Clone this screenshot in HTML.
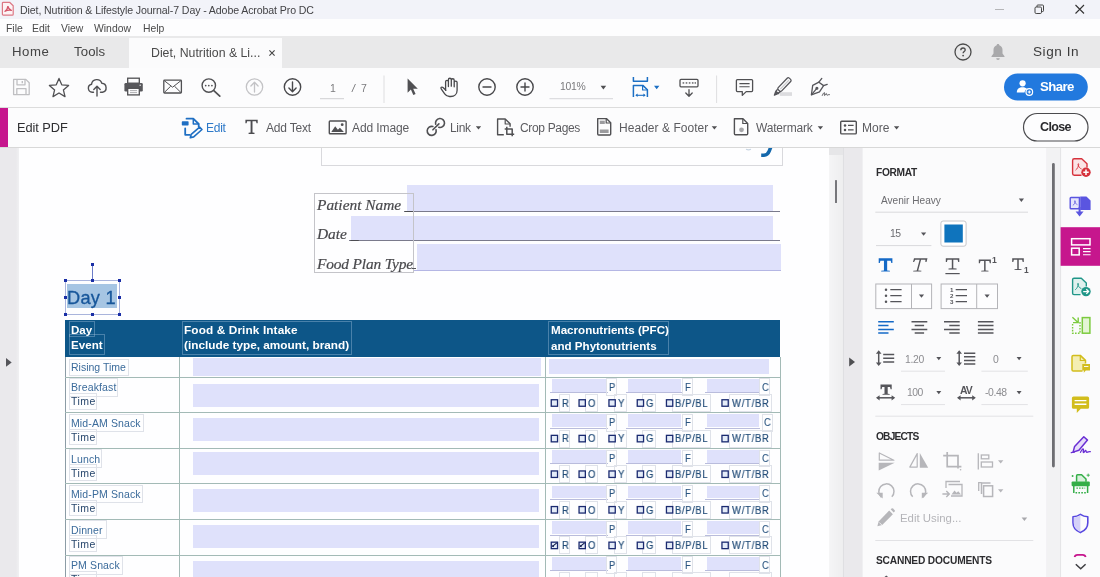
<!DOCTYPE html>
<html>
<head>
<meta charset="utf-8">
<title>Acrobat</title>
<style>
*{box-sizing:border-box;margin:0;padding:0}
html,body{width:1100px;height:577px;overflow:hidden;background:#fff;font-family:"Liberation Sans",sans-serif;color:#2c2c2c}
.abs{position:absolute}
#titlebar{left:0;top:0;width:1100px;height:19px;background:#f2f3f9}
#menubar{left:0;top:19px;width:1100px;height:17px;background:#fdfdfe}
#tabbar{left:0;top:36px;width:1100px;height:32px;background:#e9e9ea}
#toolbar{left:0;top:68px;width:1100px;height:40px;background:#fcfcfd;border-bottom:1px solid #dcdcdc}
#editbar{left:0;top:108px;width:1100px;height:40px;background:#fcfcfd;border-bottom:1px solid #d8d8d8}
#doc{left:0;top:148px;width:845px;height:429px;background:#fefeff;overflow:hidden}
#panel{left:845px;top:148px;width:255px;height:429px;background:#eae9ec;overflow:hidden}
.t{position:absolute;white-space:nowrap;line-height:1;will-change:transform}
svg{position:absolute;overflow:visible}
</style>
</head>
<body>

<div id="titlebar" class="abs">
  <svg style="left:.2px;top:.2px" width="15" height="17" viewBox="0 0 15 17"><path d="M3.300 2.300h6.300l3.600 3.500v8.400q0 .9-.9 .9h-9q-.9 0-.9-.9v-11q0-.9 .9-.9z" fill="#fdf3f5" stroke="#dc7885" stroke-width="1.200" stroke-linejoin="round"/><path d="M5 11.400q2.300-1.200 2.900-5.200q.6 3.300 3.500 4.100M5 11.300q3-1.500 6.300-1" fill="none" stroke="#d4566a" stroke-width="1.250" stroke-linecap="round"/></svg>
  <div class="t" style="left:19.600px;top:5px;font-size:10.6px;letter-spacing:-0.110px;color:#434346">Diet, Nutrition &amp; Lifestyle Journal-7 Day - Adobe Acrobat Pro DC</div>
  <svg style="left:994px;top:4px" width="92" height="12" viewBox="0 0 92 12"><path d="M1 5.500h9" stroke="#b5b5b8" stroke-width="1"/><rect x="41" y="3" width="6.500" height="6.500" rx="1.200" fill="none" stroke="#444" stroke-width="1"/><path d="M43 3v-1.200q0-.8 .8-.8h4.700q1 0 1 1v4.700q0 .8-.8 .8h-1.200" fill="none" stroke="#444" stroke-width="1"/><path d="M81.500 1l8.500 8.500M90 1l-8.500 8.500" stroke="#333" stroke-width="1.100"/></svg>
</div>
<div id="menubar" class="abs">
  <div class="t" style="left:6px;top:5px;font-size:10.4px;color:#4a4a4a">File</div>
  <div class="t" style="left:32px;top:5px;font-size:10.4px;color:#4a4a4a">Edit</div>
  <div class="t" style="left:61px;top:5px;font-size:10.4px;color:#4a4a4a">View</div>
  <div class="t" style="left:94px;top:5px;font-size:10.4px;color:#4a4a4a">Window</div>
  <div class="t" style="left:143px;top:5px;font-size:10.4px;color:#4a4a4a">Help</div>
</div>
<div id="tabbar" class="abs">
  <div class="abs" style="left:129px;top:1.500px;width:153px;height:30.500px;background:#fbfbfc"></div>
  <div class="t" style="left:12.300px;top:9px;font-size:13.2px;letter-spacing:0.55px;color:#444">Home</div>
  <div class="t" style="left:74px;top:9px;font-size:13.2px;letter-spacing:0.1px;color:#444">Tools</div>
  <div class="t" style="left:150.600px;top:10.700px;font-size:12.3px;color:#4a4a4a">Diet, Nutrition &amp; Li...</div>
  <svg style="left:269px;top:13.600px" width="6" height="6" viewBox="0 0 6 6"><path d="M.4 .4l5.200 5.200M5.600 .4l-5.200 5.200" stroke="#444" stroke-width="1.100"/></svg>
  <svg style="left:954px;top:7px" width="18" height="18" viewBox="0 0 18 18"><circle cx="9" cy="9" r="8" fill="none" stroke="#4b4b4b" stroke-width="1.300"/><path d="M6.800 7.200c0-1.400 1-2.200 2.200-2.200s2.200.800 2.200 2c0 1.500-2.100 1.600-2.100 3.300" fill="none" stroke="#4b4b4b" stroke-width="1.300"/><circle cx="9.100" cy="12.600" r=".9" fill="#4b4b4b"/></svg>
  <svg style="left:990px;top:7px" width="16" height="18" viewBox="0 0 16 18"><path d="M8 1c-.8 0-1.300.5-1.300 1.200c-2 .6-3.200 2.300-3.200 4.600v3.700l-2 2.700v.8h13v-.8l-2-2.700v-3.700c0-2.300-1.200-4-3.200-4.600c0-.7-.5-1.200-1.300-1.200z" fill="#a9a9ab"/><path d="M6.200 15.300a1.800 1.800 0 0 0 3.600 0z" fill="#a9a9ab"/></svg>
  <div class="t" style="left:1033px;top:9px;font-size:13.6px;letter-spacing:0.55px;color:#3c3c3c">Sign In</div>
</div>

<div id="toolbar" class="abs">
<svg style="left:0;top:0" width="1100" height="40" viewBox="0 68 1100 40">
  <!-- save (disabled) -->
  <g fill="none" stroke="#bfbfc2" stroke-width="1.3" stroke-linejoin="round">
    <path d="M13.600 79.400h12.200l3.400 3.400v11.800h-15.600z"/>
    <path d="M17 79.400v5.400h8v-5.400M16.800 94.600v-6h9.200v6"/>
    <path d="M22.300 81v2.300" stroke-width="1.400"/>
  </g>
  <!-- star -->
  <path d="M59 78.400l2.750 6.400 6.850.6-5.200 4.500 1.600 6.700-6-3.600-6 3.600 1.600-6.700-5.200-4.500 6.850-.6z" fill="none" stroke="#505053" stroke-width="1.300" stroke-linejoin="round"/>
  <!-- cloud upload -->
  <g fill="none" stroke="#505053" stroke-width="1.400" stroke-linecap="round" stroke-linejoin="round">
    <path d="M93.500 92.200h-1.300a4 4 0 0 1-.700-7.900a5.300 5.300 0 0 1 10.300-1a4.500 4.500 0 0 1 .700 8.900h-2"/>
    <path d="M97 96v-9.500M93.800 89.600l3.200-3.300 3.200 3.300"/>
  </g>
  <!-- printer -->
  <g>
    <rect x="127.700" y="78.200" width="11.600" height="5" fill="#fcfcfd" stroke="#505053" stroke-width="1.300"/>
    <rect x="124.400" y="83" width="18.400" height="8.600" rx="1.300" fill="#58585c"/>
    <rect x="127.700" y="88.300" width="11.600" height="6.600" fill="#fcfcfd" stroke="#505053" stroke-width="1.300"/>
    <path d="M130 90.600h7M130 92.600h7" stroke="#9a9a9d" stroke-width=".8"/>
    <circle cx="140.200" cy="85.200" r=".8" fill="#ddd"/>
  </g>
  <!-- envelope -->
  <g fill="none" stroke="#505053" stroke-width="1.300" stroke-linejoin="round">
    <rect x="163.800" y="80.200" width="17.600" height="12.800" rx=".8"/>
    <path d="M164.200 80.600l8.400 6.600 8.400-6.600M164.200 92.600l6.500-6.400M181 92.600l-6.500-6.400" stroke-width="1"/>
  </g>
  <!-- search -->
  <g fill="none" stroke="#505053" stroke-width="1.400" stroke-linecap="round">
    <circle cx="208.800" cy="85.600" r="6.700"/>
    <path d="M213.800 90.600l6 5.600" stroke-width="1.700"/>
  </g>
  <g fill="#505053"><circle cx="205.700" cy="85.600" r=".85"/><circle cx="208.800" cy="85.600" r=".85"/><circle cx="211.900" cy="85.600" r=".85"/></g>
  <!-- up (disabled) -->
  <g fill="none" stroke="#c3c3c6" stroke-width="1.300" stroke-linecap="round" stroke-linejoin="round">
    <circle cx="254.500" cy="87" r="8.200"/>
    <path d="M254.500 92v-9.600M250.900 86l3.600-3.700 3.600 3.700"/>
  </g>
  <!-- down -->
  <g fill="none" stroke="#48484b" stroke-width="1.400" stroke-linecap="round" stroke-linejoin="round">
    <circle cx="292.500" cy="87" r="8.200"/>
    <path d="M292.500 82v9.600M288.900 88l3.600 3.700 3.600-3.700"/>
  </g>
  <path d="M320 98.700h24" stroke="#cfcfd2" stroke-width="1"/>
  <path d="M384 75.500v27.500M716.600 75.500v27.500" stroke="#dedee0" stroke-width="1"/>
  <!-- arrow cursor -->
  <path d="M407.600 78.600v14.200l3.300-3.200 2.400 5.400 2.300-1-2.400-5.300h4.600z" fill="#505053"/>
  <!-- hand -->
  <g fill="none" stroke="#48484b" stroke-width="1.300" stroke-linecap="round" stroke-linejoin="round">
    <path d="M445.600 90.400V81.700a1.400 1.400 0 0 1 2.800 0V86.600M448.400 86.200V79.700a1.450 1.450 0 0 1 2.900 0V86.200M451.300 86.200V80.200a1.450 1.450 0 0 1 2.900 0V86.600M454.200 86.800V82.600a1.450 1.450 0 0 1 2.900 0V90.200c0 3.900-2.700 6.300-6.400 6.300h-1.200c-2.200 0-3.600-.9-4.800-2.600l-3.500-5c-.9-1.300.6-2.400 1.800-1.400l2.900 2.700"/>
  </g>
  <!-- minus / plus -->
  <g fill="none" stroke="#48484b" stroke-width="1.400" stroke-linecap="round">
    <circle cx="487" cy="87" r="8.200"/><path d="M483 87h8"/>
    <circle cx="525" cy="87" r="8.200"/><path d="M521 87h8M525 83v8"/>
  </g>
  <path d="M549.500 98.700h63.500" stroke="#d6d6d9" stroke-width="1"/>
  <path d="M600.600 85.800h5.600l-2.800 3.600z" fill="#505053"/>
  <!-- fit -->
  <g fill="none" stroke="#1c6fc4" stroke-width="1.500" stroke-linejoin="round">
    <path d="M633.400 77v4.300h14v-4.300"/>
    <path d="M633.400 97v-11.600h9.400l4.600 4.400v7.200"/>
    <path d="M642.600 85.600v4.400h4.600" stroke-width="1.200"/>
    <path d="M636 95.300h9" stroke-width="1.100"/>
  </g>
  <path d="M635.300 95.300l2.300-1.800v3.600zM645.700 95.300l-2.300-1.800v3.600zM654 85.800h5.400l-2.700 3.500z" fill="#1c6fc4"/>
  <!-- keyboard -->
  <g fill="none" stroke="#505053" stroke-width="1.300" stroke-linecap="round" stroke-linejoin="round">
    <rect x="680" y="79.400" width="18" height="7.400" rx="1"/>
    <path d="M689 89.600v6.400M685.800 93l3.200 3.200 3.200-3.200"/>
  </g>
  <g fill="#505053"><rect x="682.600" y="82.300" width="1.600" height="1.300"/><rect x="685.700" y="82.300" width="1.600" height="1.300"/><rect x="688.800" y="82.300" width="1.600" height="1.300"/><rect x="691.900" y="82.300" width="1.600" height="1.300"/><rect x="694.600" y="82.300" width="1.400" height="1.300"/></g>
  <!-- comment -->
  <g fill="none" stroke="#505053" stroke-width="1.300" stroke-linejoin="round">
    <path d="M737.400 79.600h14.200q1 0 1 1v10q0 1-1 1h-5.400l-3.900 3.800v-3.800h-4.900q-1 0-1-1v-10q0-1 1-1z"/>
    <path d="M739.400 83.600h10.200M739.400 86.800h10.200" stroke-width="1.100"/>
  </g>
  <!-- highlighter -->
  <g>
    <rect x="779.700" y="92.200" width="12.300" height="3.700" fill="#dcdcdf"/>
    <g transform="translate(784.300 84.700) rotate(-46.500)" fill="none" stroke="#55555a" stroke-width="1.300" stroke-linejoin="round">
      <rect x="-7.800" y="-2.400" width="16" height="4.800" rx="1.500" fill="#fcfcfd"/>
      <path d="M-6 .2h12.500" stroke="#c9c9cc" stroke-width="1.200"/>
      <path d="M-7.800 -1.700h-2.700v3.400h2.700" />
      <path d="M-11 -1.500l-3.400 1.500 3.400 1.500z" fill="#55555a"/>
    </g>
  </g>
  <!-- sign -->
  <g fill="none" stroke="#55555a" stroke-width="1.300" stroke-linejoin="round" stroke-linecap="round">
    <path d="M818.900 82.200l-6.200 3.100-1.300 9.500 8.100-3 4.100-6.200z"/>
    <path d="M821.800 78.400l-2.900 3.800M827.200 84.300l-3.600 1.300"/>
    <path d="M811.600 94.600l5-5.900"/><circle cx="816.900" cy="88.300" r=".9" fill="#55555a"/>
    <path d="M822.300 95.400c.9-1.900 1.600-3 2.100-2.700c.6.400-.6 2.700.2 2.800c.8 0 1-2 1.700-2c.6 0 .1 1.800.8 1.800c.5 0 .9-.9 2.300-.7" stroke-width="1"/>
  </g>
  <!-- share -->
  <rect x="1004" y="73.400" width="83.800" height="27.200" rx="13.600" fill="#2279de"/>
  <g fill="#fff">
    <circle cx="1022.600" cy="83.300" r="3.100"/>
    <path d="M1016.800 92.600c0-3.600 2.300-5.400 5.800-5.400c2 0 3.400.6 4.400 1.600a4.800 4.800 0 0 0-2.500 3.800z"/>
    <circle cx="1029.300" cy="92" r="3.900"/>
  </g>
  <circle cx="1029.300" cy="92" r="2.700" fill="#2279de"/><path d="M1027.700 92h3.200M1029.300 90.400v3.200" stroke="#fff" stroke-width="1.100"/>
</svg>
  <div class="t" style="left:329px;top:15px;width:8px;text-align:center;font-size:10.5px;color:#7a7a7d">1</div>
  <div class="t" style="left:352px;top:15px;font-size:10.5px;color:#6a6a6d;font-style:italic">/</div>
  <div class="t" style="left:361px;top:15px;font-size:10.5px;color:#7a7a7d">7</div>
  <div class="t" style="left:560px;top:14px;font-size:10.4px;letter-spacing:-0.3px;color:#7a7a7d">101%</div>
  <div class="t" style="left:1040px;top:12.400px;font-size:13.200px;font-weight:bold;letter-spacing:-0.600px;color:#fff">Share</div>
</div>

<div id="editbar" class="abs">
<div class="abs" style="left:0;top:0;width:8px;height:39px;background:#c6168d"></div>
<svg style="left:0;top:0" width="1100" height="40" viewBox="0 108 1100 40">
  <!-- edit icon -->
  <g fill="none" stroke="#1f6fc3" stroke-width="1.800" stroke-linejoin="round" stroke-linecap="round">
    <path d="M186.500 118.700h6.800l5.400 5.300v2.600"/>
    <path d="M193.300 118.900v5.100h5.200" stroke-width="1.500"/>
    <path d="M185.200 128.400v6.400h4.600"/>
    <path d="M199.600 127.200l2.400 2.300-8.300 7.400-3.400.8.900-3.300z" stroke-width="1.600"/>
  </g>
  <rect x="181.800" y="121.200" width="6.800" height="4.300" rx=".7" fill="#1f6fc3"/>
  <!-- T -->
  <path d="M245.400 119.700h12.300v3.600h-1.200l-.5-2.100h-3.500v11.200l2 .4v1.100h-5.900v-1.100l2-.4v-11.200h-3.500l-.5 2.100h-1.200z" fill="#4c4c50"/>
  <!-- image -->
  <g>
    <rect x="329.300" y="121" width="16.800" height="12.700" rx=".8" fill="none" stroke="#505053" stroke-width="1.400"/>
    <path d="M331.300 132l3.900-5.800 2.700 3.600 2-2 4 4.200z" fill="#505053"/>
    <circle cx="342.200" cy="124.700" r="1.400" fill="#505053"/>
  </g>
  <!-- link -->
  <g fill="none" stroke="#505053" stroke-width="1.600" stroke-linecap="round">
    <path d="M435.650 124.160A4.500 4.500 0 1 1 438.840 127.350"/>
    <path d="M436.050 129.740A4.500 4.500 0 1 1 432.860 126.550"/>
    <path d="M432.900 129.800L438.900 123.900"/>
  </g>
  <path d="M475.800 126.200h5.400l-2.700 3.300zM711.700 126.200h5.400l-2.700 3.300zM817.700 126.200h5.400l-2.700 3.300zM893.900 126.200h5.400l-2.700 3.300z" fill="#505053"/>
  <!-- crop pages -->
  <g fill="none" stroke="#505053" stroke-width="1.400" stroke-linejoin="round">
    <path d="M503.800 134.700h-6.200v-15.700h7.600l4.900 4.800v3"/>
    <path d="M505.200 119.200v4.800h4.800" stroke-width="1.200"/>
    <path d="M506.800 126.700v7.500h7.400M504.700 128.900h7.500v7.300" stroke-width="1.500"/>
  </g>
  <!-- header footer -->
  <g>
    <path d="M597.700 118.600h8.700l4.300 4.200v11.200q0 1-1 1h-11q-1 0-1-1z" fill="none" stroke="#505053" stroke-width="1.400" stroke-linejoin="round"/>
    <path d="M606.200 118.800v4.200h4.300" fill="none" stroke="#505053" stroke-width="1.200"/>
    <rect x="599.800" y="120.700" width="5" height="3.300" fill="#9b9b9e"/>
    <rect x="599.800" y="129.500" width="8.800" height="3.500" fill="#9b9b9e"/>
  </g>
  <!-- watermark -->
  <g>
    <path d="M734.400 118.800h8.600l4.700 4.600v10.400q0 1-1 1h-11.300q-1 0-1-1z" fill="none" stroke="#505053" stroke-width="1.400" stroke-linejoin="round"/>
    <path d="M742.800 119v4.500h4.700" fill="none" stroke="#505053" stroke-width="1.200"/>
    <circle cx="741.500" cy="129.800" r="2.400" fill="#a6a6a9"/>
  </g>
  <!-- more -->
  <g>
    <rect x="840.700" y="121.200" width="15.600" height="12.700" rx="1" fill="none" stroke="#505053" stroke-width="1.400"/>
    <circle cx="845" cy="125.400" r="1.250" fill="#505053"/><circle cx="845" cy="129.900" r="1.250" fill="#505053"/>
    <path d="M848 125.400h5.600M848 129.900h5.600" stroke="#505053" stroke-width="1.400"/>
  </g>
  <!-- close -->
  <rect x="1023.500" y="113.500" width="64.500" height="27.500" rx="13.750" fill="#fdfdfe" stroke="#4b4b4e" stroke-width="1.200"/>
</svg>
  <div class="t" style="left:17px;top:14px;font-size:12.8px;letter-spacing:-0.05px;color:#2e2e31">Edit PDF</div>
  <div class="t" style="left:206.300px;top:13.500px;font-size:12px;letter-spacing:-0.250px;color:#2c78c8">Edit</div>
  <div class="t" style="left:265.800px;top:13.500px;font-size:12px;letter-spacing:-0.2px;color:#5c5c60">Add Text</div>
  <div class="t" style="left:352px;top:13.500px;font-size:12px;letter-spacing:-0.1px;color:#5c5c60">Add Image</div>
  <div class="t" style="left:450px;top:13.500px;font-size:12px;letter-spacing:-0.300px;color:#5c5c60">Link</div>
  <div class="t" style="left:520px;top:13.500px;font-size:12px;letter-spacing:-0.340px;color:#5c5c60">Crop Pages</div>
  <div class="t" style="left:619px;top:13.500px;font-size:12px;letter-spacing:.04px;color:#5c5c60">Header &amp; Footer</div>
  <div class="t" style="left:755.800px;top:13.500px;font-size:12px;letter-spacing:-0.180px;color:#5c5c60">Watermark</div>
  <div class="t" style="left:861.600px;top:13.500px;font-size:12px;letter-spacing:0px;color:#5c5c60">More</div>
  <div class="t" style="left:1039.500px;top:13.400px;font-size:12.500px;font-weight:bold;letter-spacing:-0.650px;color:#2a2a2d">Close</div>
</div>
<div id="doc" class="abs">
<div class="abs" style="left:0.0px;top:0.0px;width:19.0px;height:429.0px;background:linear-gradient(90deg,#eae9ec 0,#eae9ec 83%,#f0f0f2 100%)"></div>
<svg style="left:6.200px;top:210px" width="6" height="9" viewBox="0 0 6 9"><path d="M0 0l5.700 4.400L0 8.800z" fill="#55555a"/></svg>
<div class="abs" style="left:828.6px;top:0.0px;width:14.8px;height:429.0px;background:linear-gradient(90deg,#f5f5f6,#eeeeef)"></div>
<div class="abs" style="left:843.4px;top:0.0px;width:1.6px;height:429.0px;background:#eae9ec"></div>
<div class="abs" style="left:842.9px;top:0.0px;width:1.0px;height:429.0px;background:#dfdfe2"></div>
<div class="abs" style="left:828.6px;top:0.0px;width:14.8px;height:7.0px;background:#e6e6e8"></div>
<div class="abs" style="left:834.9px;top:32.0px;width:2.5px;height:22.6px;background:#77777b;border-radius:.6px"></div>
<div class="abs" style="left:321.0px;top:-8.0px;width:462.0px;height:26.0px;border:1px solid #d9d9dd;background:#fefeff"></div>
<svg style="left:755px;top:-4px" width="24" height="16" viewBox="755 144 24 16"><path d="M771.600 145l-2.400 6.200q-1.500 4-5.200 4H761.200" fill="none" stroke="#1468ac" stroke-width="3.500"/><path d="M746 149.300q2.500 1 5 0" fill="none" stroke="#c9d6e4" stroke-width="1.200"/></svg>
<div class="abs" style="left:407.4px;top:37.0px;width:365.6px;height:25.6px;background:#dfe1fb"></div>
<div class="abs" style="left:351.0px;top:67.6px;width:422.0px;height:24.4px;background:#dfe1fb"></div>
<div class="abs" style="left:417.0px;top:96.4px;width:363.6px;height:25.2px;background:#dfe1fb"></div>
<div class="abs" style="left:404.0px;top:62.6px;width:375.8px;height:1.0px;background:#7a7a8c"></div>
<div class="abs" style="left:348.5px;top:92.0px;width:431.3px;height:1.0px;background:#7a7a8c"></div>
<div class="abs" style="left:414.0px;top:121.6px;width:366.6px;height:1.0px;background:#b4b6e4"></div>
<div class="abs" style="left:314.0px;top:45.3px;width:99.5px;height:79.9px;border:1px solid #c4c4c9"></div>
<div class="t" style="left:317.0px;top:48.9px;font-size:15.4px;font-family:'Liberation Serif',serif;font-style:italic;color:#48484c;-webkit-text-stroke:.2px #48484c;">Patient Name&nbsp;_</div>
<div class="t" style="left:317.0px;top:78.4px;font-size:15.4px;font-family:'Liberation Serif',serif;font-style:italic;color:#48484c;-webkit-text-stroke:.2px #48484c;">Date&nbsp;_</div>
<div class="t" style="left:317.0px;top:107.9px;font-size:15.4px;font-family:'Liberation Serif',serif;font-style:italic;color:#48484c;-webkit-text-stroke:.2px #48484c;letter-spacing:-0.15px;">Food Plan Type</div>
<div class="abs" style="left:412.0px;top:119.8px;width:3.5px;height:1.0px;background:#55555a"></div>
<div class="abs" style="left:67.1px;top:136.0px;width:50.4px;height:23.7px;background:#a6c5e3"></div>
<div class="t" style="left:66.8px;top:140.9px;font-size:18.2px;color:#17569a;-webkit-text-stroke:.32px #17569a;letter-spacing:.3px;">Day 1</div>
<div class="abs" style="left:64.7px;top:132.2px;width:55.7px;height:34.8px;border:1px solid #a9b4dc"></div>
<div class="abs" style="left:92.0px;top:117.0px;width:1.0px;height:15.0px;background:#6c7cc8"></div>
<div class="abs" style="left:90.9px;top:115.2px;width:3.2px;height:3.2px;background:#1a2ea6"></div>
<div class="abs" style="left:63.6px;top:131.1px;width:3.2px;height:3.2px;background:#1a2ea6"></div>
<div class="abs" style="left:90.9px;top:131.1px;width:3.2px;height:3.2px;background:#1a2ea6"></div>
<div class="abs" style="left:118.3px;top:131.1px;width:3.2px;height:3.2px;background:#1a2ea6"></div>
<div class="abs" style="left:63.6px;top:148.0px;width:3.2px;height:3.2px;background:#1a2ea6"></div>
<div class="abs" style="left:118.3px;top:148.0px;width:3.2px;height:3.2px;background:#1a2ea6"></div>
<div class="abs" style="left:63.6px;top:164.9px;width:3.2px;height:3.2px;background:#1a2ea6"></div>
<div class="abs" style="left:90.9px;top:164.9px;width:3.2px;height:3.2px;background:#1a2ea6"></div>
<div class="abs" style="left:118.3px;top:164.9px;width:3.2px;height:3.2px;background:#1a2ea6"></div>
<div class="abs" style="left:65.0px;top:172.0px;width:715.4px;height:37.0px;background:#0d5688"></div>
<div class="abs" style="left:68.5px;top:172.5px;width:26.0px;height:16.5px;border:1px solid rgba(170,200,225,.38)"></div>
<div class="abs" style="left:68.5px;top:186.0px;width:36.9px;height:21.0px;border:1px solid rgba(170,200,225,.38)"></div>
<div class="abs" style="left:181.7px;top:172.5px;width:170.3px;height:34.5px;border:1px solid rgba(170,200,225,.38)"></div>
<div class="abs" style="left:548.4px;top:172.5px;width:121.0px;height:34.5px;border:1px solid rgba(170,200,225,.38)"></div>
<div class="t" style="left:71.3px;top:176.0px;font-size:11.6px;font-weight:bold;color:#fff;">Day</div>
<div class="t" style="left:71.3px;top:191.2px;font-size:11.6px;font-weight:bold;color:#fff;">Event</div>
<div class="t" style="left:184.2px;top:176.9px;font-size:11.8px;font-weight:bold;color:#fff;letter-spacing:.12px;">Food &amp; Drink Intake</div>
<div class="t" style="left:184.2px;top:191.5px;font-size:11.8px;font-weight:bold;color:#fff;">(include type, amount, brand)</div>
<div class="t" style="left:550.9px;top:176.2px;font-size:11.6px;font-weight:bold;color:#fff;">Macronutrients (PFC)</div>
<div class="t" style="left:550.9px;top:191.6px;font-size:11.6px;font-weight:bold;color:#fff;">and Phytonutrients</div>
<div class="abs" style="left:65.0px;top:209.0px;width:1.0px;height:220.0px;background:#8c9ca6"></div>
<div class="abs" style="left:179.3px;top:209.0px;width:1.0px;height:220.0px;background:#a3bab6"></div>
<div class="abs" style="left:544.7px;top:209.0px;width:1.0px;height:220.0px;background:#a3bab6"></div>
<div class="abs" style="left:779.6px;top:209.0px;width:1.0px;height:220.0px;background:#a3bab6"></div>
<div class="abs" style="left:65.0px;top:228.5px;width:715.6px;height:1.0px;background:#a3bab6"></div>
<div class="abs" style="left:65.0px;top:264.1px;width:715.6px;height:1.0px;background:#a3bab6"></div>
<div class="abs" style="left:65.0px;top:299.7px;width:715.6px;height:1.0px;background:#a3bab6"></div>
<div class="abs" style="left:65.0px;top:335.3px;width:715.6px;height:1.0px;background:#a3bab6"></div>
<div class="abs" style="left:65.0px;top:370.9px;width:715.6px;height:1.0px;background:#a3bab6"></div>
<div class="abs" style="left:65.0px;top:406.5px;width:715.6px;height:1.0px;background:#a3bab6"></div>
<div class="abs" style="left:65.0px;top:442.1px;width:715.6px;height:1.0px;background:#a3bab6"></div>
<div class="abs" style="left:69.0px;top:211.0px;width:59.5px;height:16.5px;border:1px solid #dfe2e9"></div>
<div class="t" style="left:71.3px;top:214.2px;font-size:10.5px;color:#3b6b9b;">Rising Time</div>
<div class="abs" style="left:192.6px;top:209.5px;width:348.4px;height:18.8px;background:#dfe1fb"></div>
<div class="abs" style="left:549.0px;top:211.0px;width:219.6px;height:15.3px;background:#dfe1fb"></div>
<div class="abs" style="left:69.0px;top:230.0px;width:49.1px;height:18.5px;border:1px solid #dfe2e9"></div>
<div class="abs" style="left:69.0px;top:245.0px;width:28.0px;height:16.5px;border:1px solid #dfe2e9"></div>
<div class="t" style="left:71.3px;top:234.4px;font-size:10.5px;color:#3b6b9b;letter-spacing:.12px;">Breakfast</div>
<div class="t" style="left:71.3px;top:248.3px;font-size:10.5px;color:#27466c;letter-spacing:.45px;">Time</div>
<div class="abs" style="left:192.6px;top:235.8px;width:346.0px;height:23.0px;background:#dfe1fb"></div>
<div class="abs" style="left:551.5px;top:230.7px;width:55.3px;height:12.9px;background:#dfe1fb"></div>
<div class="abs" style="left:549.5px;top:244.2px;width:58.0px;height:1.0px;background:#b9bcdc"></div>
<div class="abs" style="left:606.0px;top:230.3px;width:11.0px;height:17.7px;border:1px solid #dfe2e9"></div>
<div class="t" style="left:608.9px;top:234.6px;font-size:10.0px;color:#2a5580;transform:scaleX(.93);transform-origin:0 0;-webkit-text-stroke:.1px #2a5580;">P</div>
<div class="abs" style="left:628.2px;top:230.7px;width:52.8px;height:12.9px;background:#dfe1fb"></div>
<div class="abs" style="left:626.2px;top:244.2px;width:55.5px;height:1.0px;background:#b9bcdc"></div>
<div class="abs" style="left:681.6px;top:230.3px;width:11.0px;height:17.7px;border:1px solid #dfe2e9"></div>
<div class="t" style="left:684.5px;top:234.6px;font-size:10.0px;color:#2a5580;transform:scaleX(.93);transform-origin:0 0;-webkit-text-stroke:.1px #2a5580;">F</div>
<div class="abs" style="left:706.7px;top:230.7px;width:52.8px;height:12.9px;background:#dfe1fb"></div>
<div class="abs" style="left:704.7px;top:244.2px;width:55.5px;height:1.0px;background:#b9bcdc"></div>
<div class="abs" style="left:759.0px;top:230.3px;width:11.0px;height:17.7px;border:1px solid #dfe2e9"></div>
<div class="t" style="left:761.9px;top:234.6px;font-size:10.0px;color:#2a5580;transform:scaleX(.93);transform-origin:0 0;-webkit-text-stroke:.1px #2a5580;">C</div>
<div class="abs" style="left:558.7px;top:246.0px;width:11.2px;height:18.0px;border:1px solid #dfe2e9"></div>
<div class="t" style="left:561.9px;top:249.8px;font-size:10.6px;color:#224c78;-webkit-text-stroke:.2px #224c78;transform:scaleX(.9);transform-origin:0 0;">R</div>
<div class="abs" style="left:584.8px;top:246.0px;width:13.2px;height:18.0px;border:1px solid #dfe2e9"></div>
<div class="t" style="left:588.0px;top:249.8px;font-size:10.6px;color:#224c78;-webkit-text-stroke:.2px #224c78;transform:scaleX(.9);transform-origin:0 0;">O</div>
<div class="abs" style="left:614.4px;top:246.0px;width:12.2px;height:18.0px;border:1px solid #dfe2e9"></div>
<div class="t" style="left:617.6px;top:249.8px;font-size:10.6px;color:#224c78;-webkit-text-stroke:.2px #224c78;transform:scaleX(.9);transform-origin:0 0;">Y</div>
<div class="abs" style="left:642.4px;top:246.0px;width:13.2px;height:18.0px;border:1px solid #dfe2e9"></div>
<div class="t" style="left:645.6px;top:249.8px;font-size:10.6px;color:#224c78;-webkit-text-stroke:.2px #224c78;transform:scaleX(.9);transform-origin:0 0;">G</div>
<div class="abs" style="left:671.6px;top:246.0px;width:39.2px;height:18.0px;border:1px solid #dfe2e9"></div>
<div class="t" style="left:674.8px;top:249.8px;font-size:10.6px;color:#224c78;-webkit-text-stroke:.2px #224c78;transform:scaleX(.9);transform-origin:0 0;letter-spacing:.65px;">B/P/BL</div>
<div class="abs" style="left:728.6px;top:246.0px;width:43.2px;height:18.0px;border:1px solid #dfe2e9"></div>
<div class="t" style="left:731.8px;top:249.8px;font-size:10.6px;color:#224c78;-webkit-text-stroke:.2px #224c78;transform:scaleX(.9);transform-origin:0 0;letter-spacing:.77px;">W/T/BR</div>
<div class="abs" style="left:69.0px;top:265.6px;width:75.3px;height:18.5px;border:1px solid #dfe2e9"></div>
<div class="abs" style="left:69.0px;top:280.6px;width:28.0px;height:16.5px;border:1px solid #dfe2e9"></div>
<div class="t" style="left:71.3px;top:270.0px;font-size:10.5px;color:#3b6b9b;letter-spacing:.12px;">Mid-AM Snack</div>
<div class="t" style="left:71.3px;top:283.9px;font-size:10.5px;color:#27466c;letter-spacing:.45px;">Time</div>
<div class="abs" style="left:192.6px;top:269.8px;width:346.0px;height:23.0px;background:#dfe1fb"></div>
<div class="abs" style="left:551.5px;top:266.3px;width:55.3px;height:12.9px;background:#dfe1fb"></div>
<div class="abs" style="left:549.5px;top:279.8px;width:58.0px;height:1.0px;background:#b9bcdc"></div>
<div class="abs" style="left:606.0px;top:265.9px;width:11.0px;height:17.7px;border:1px solid #dfe2e9"></div>
<div class="t" style="left:608.9px;top:270.2px;font-size:10.0px;color:#2a5580;transform:scaleX(.93);transform-origin:0 0;-webkit-text-stroke:.1px #2a5580;">P</div>
<div class="abs" style="left:628.2px;top:266.3px;width:52.8px;height:12.9px;background:#dfe1fb"></div>
<div class="abs" style="left:626.2px;top:279.8px;width:55.5px;height:1.0px;background:#b9bcdc"></div>
<div class="abs" style="left:681.6px;top:265.9px;width:11.0px;height:17.7px;border:1px solid #dfe2e9"></div>
<div class="t" style="left:684.5px;top:270.2px;font-size:10.0px;color:#2a5580;transform:scaleX(.93);transform-origin:0 0;-webkit-text-stroke:.1px #2a5580;">F</div>
<div class="abs" style="left:706.7px;top:266.3px;width:52.8px;height:12.9px;background:#dfe1fb"></div>
<div class="abs" style="left:704.7px;top:279.8px;width:55.5px;height:1.0px;background:#b9bcdc"></div>
<div class="abs" style="left:761.5px;top:265.9px;width:11.0px;height:17.7px;border:1px solid #dfe2e9"></div>
<div class="t" style="left:764.4px;top:270.2px;font-size:10.0px;color:#2a5580;transform:scaleX(.93);transform-origin:0 0;-webkit-text-stroke:.1px #2a5580;">C</div>
<div class="abs" style="left:558.7px;top:281.6px;width:11.2px;height:18.0px;border:1px solid #dfe2e9"></div>
<div class="t" style="left:561.9px;top:285.4px;font-size:10.6px;color:#224c78;-webkit-text-stroke:.2px #224c78;transform:scaleX(.9);transform-origin:0 0;">R</div>
<div class="abs" style="left:584.8px;top:281.6px;width:13.2px;height:18.0px;border:1px solid #dfe2e9"></div>
<div class="t" style="left:588.0px;top:285.4px;font-size:10.6px;color:#224c78;-webkit-text-stroke:.2px #224c78;transform:scaleX(.9);transform-origin:0 0;">O</div>
<div class="abs" style="left:614.4px;top:281.6px;width:12.2px;height:18.0px;border:1px solid #dfe2e9"></div>
<div class="t" style="left:617.6px;top:285.4px;font-size:10.6px;color:#224c78;-webkit-text-stroke:.2px #224c78;transform:scaleX(.9);transform-origin:0 0;">Y</div>
<div class="abs" style="left:642.4px;top:281.6px;width:13.2px;height:18.0px;border:1px solid #dfe2e9"></div>
<div class="t" style="left:645.6px;top:285.4px;font-size:10.6px;color:#224c78;-webkit-text-stroke:.2px #224c78;transform:scaleX(.9);transform-origin:0 0;">G</div>
<div class="abs" style="left:671.6px;top:281.6px;width:39.2px;height:18.0px;border:1px solid #dfe2e9"></div>
<div class="t" style="left:674.8px;top:285.4px;font-size:10.6px;color:#224c78;-webkit-text-stroke:.2px #224c78;transform:scaleX(.9);transform-origin:0 0;letter-spacing:.65px;">B/P/BL</div>
<div class="abs" style="left:728.6px;top:281.6px;width:43.2px;height:18.0px;border:1px solid #dfe2e9"></div>
<div class="t" style="left:731.8px;top:285.4px;font-size:10.6px;color:#224c78;-webkit-text-stroke:.2px #224c78;transform:scaleX(.9);transform-origin:0 0;letter-spacing:.77px;">W/T/BR</div>
<div class="abs" style="left:69.0px;top:301.2px;width:33.3px;height:18.5px;border:1px solid #dfe2e9"></div>
<div class="abs" style="left:69.0px;top:316.2px;width:28.0px;height:16.5px;border:1px solid #dfe2e9"></div>
<div class="t" style="left:71.3px;top:305.6px;font-size:10.5px;color:#3b6b9b;letter-spacing:.12px;">Lunch</div>
<div class="t" style="left:71.3px;top:319.5px;font-size:10.5px;color:#27466c;letter-spacing:.45px;">Time</div>
<div class="abs" style="left:192.6px;top:304.2px;width:346.0px;height:23.0px;background:#dfe1fb"></div>
<div class="abs" style="left:551.5px;top:301.9px;width:55.3px;height:12.9px;background:#dfe1fb"></div>
<div class="abs" style="left:549.5px;top:315.4px;width:58.0px;height:1.0px;background:#b9bcdc"></div>
<div class="abs" style="left:606.0px;top:301.5px;width:11.0px;height:17.7px;border:1px solid #dfe2e9"></div>
<div class="t" style="left:608.9px;top:305.8px;font-size:10.0px;color:#2a5580;transform:scaleX(.93);transform-origin:0 0;-webkit-text-stroke:.1px #2a5580;">P</div>
<div class="abs" style="left:628.2px;top:301.9px;width:52.8px;height:12.9px;background:#dfe1fb"></div>
<div class="abs" style="left:626.2px;top:315.4px;width:55.5px;height:1.0px;background:#b9bcdc"></div>
<div class="abs" style="left:681.6px;top:301.5px;width:11.0px;height:17.7px;border:1px solid #dfe2e9"></div>
<div class="t" style="left:684.5px;top:305.8px;font-size:10.0px;color:#2a5580;transform:scaleX(.93);transform-origin:0 0;-webkit-text-stroke:.1px #2a5580;">F</div>
<div class="abs" style="left:706.7px;top:301.9px;width:52.8px;height:12.9px;background:#dfe1fb"></div>
<div class="abs" style="left:704.7px;top:315.4px;width:55.5px;height:1.0px;background:#b9bcdc"></div>
<div class="abs" style="left:759.0px;top:301.5px;width:11.0px;height:17.7px;border:1px solid #dfe2e9"></div>
<div class="t" style="left:761.9px;top:305.8px;font-size:10.0px;color:#2a5580;transform:scaleX(.93);transform-origin:0 0;-webkit-text-stroke:.1px #2a5580;">C</div>
<div class="abs" style="left:558.7px;top:317.2px;width:11.2px;height:18.0px;border:1px solid #dfe2e9"></div>
<div class="t" style="left:561.9px;top:321.0px;font-size:10.6px;color:#224c78;-webkit-text-stroke:.2px #224c78;transform:scaleX(.9);transform-origin:0 0;">R</div>
<div class="abs" style="left:584.8px;top:317.2px;width:13.2px;height:18.0px;border:1px solid #dfe2e9"></div>
<div class="t" style="left:588.0px;top:321.0px;font-size:10.6px;color:#224c78;-webkit-text-stroke:.2px #224c78;transform:scaleX(.9);transform-origin:0 0;">O</div>
<div class="abs" style="left:614.4px;top:317.2px;width:12.2px;height:18.0px;border:1px solid #dfe2e9"></div>
<div class="t" style="left:617.6px;top:321.0px;font-size:10.6px;color:#224c78;-webkit-text-stroke:.2px #224c78;transform:scaleX(.9);transform-origin:0 0;">Y</div>
<div class="abs" style="left:642.4px;top:317.2px;width:13.2px;height:18.0px;border:1px solid #dfe2e9"></div>
<div class="t" style="left:645.6px;top:321.0px;font-size:10.6px;color:#224c78;-webkit-text-stroke:.2px #224c78;transform:scaleX(.9);transform-origin:0 0;">G</div>
<div class="abs" style="left:671.6px;top:317.2px;width:39.2px;height:18.0px;border:1px solid #dfe2e9"></div>
<div class="t" style="left:674.8px;top:321.0px;font-size:10.6px;color:#224c78;-webkit-text-stroke:.2px #224c78;transform:scaleX(.9);transform-origin:0 0;letter-spacing:.65px;">B/P/BL</div>
<div class="abs" style="left:728.6px;top:317.2px;width:43.2px;height:18.0px;border:1px solid #dfe2e9"></div>
<div class="t" style="left:731.8px;top:321.0px;font-size:10.6px;color:#224c78;-webkit-text-stroke:.2px #224c78;transform:scaleX(.9);transform-origin:0 0;letter-spacing:.77px;">W/T/BR</div>
<div class="abs" style="left:69.0px;top:336.8px;width:74.3px;height:18.5px;border:1px solid #dfe2e9"></div>
<div class="abs" style="left:69.0px;top:351.8px;width:28.0px;height:16.5px;border:1px solid #dfe2e9"></div>
<div class="t" style="left:71.3px;top:341.2px;font-size:10.5px;color:#3b6b9b;letter-spacing:.12px;">Mid-PM Snack</div>
<div class="t" style="left:71.3px;top:355.1px;font-size:10.5px;color:#27466c;letter-spacing:.45px;">Time</div>
<div class="abs" style="left:192.6px;top:340.6px;width:346.0px;height:23.0px;background:#dfe1fb"></div>
<div class="abs" style="left:551.5px;top:337.5px;width:55.3px;height:12.9px;background:#dfe1fb"></div>
<div class="abs" style="left:549.5px;top:351.0px;width:58.0px;height:1.0px;background:#b9bcdc"></div>
<div class="abs" style="left:606.0px;top:337.1px;width:11.0px;height:17.7px;border:1px solid #dfe2e9"></div>
<div class="t" style="left:608.9px;top:341.4px;font-size:10.0px;color:#2a5580;transform:scaleX(.93);transform-origin:0 0;-webkit-text-stroke:.1px #2a5580;">P</div>
<div class="abs" style="left:628.2px;top:337.5px;width:52.8px;height:12.9px;background:#dfe1fb"></div>
<div class="abs" style="left:626.2px;top:351.0px;width:55.5px;height:1.0px;background:#b9bcdc"></div>
<div class="abs" style="left:681.6px;top:337.1px;width:11.0px;height:17.7px;border:1px solid #dfe2e9"></div>
<div class="t" style="left:684.5px;top:341.4px;font-size:10.0px;color:#2a5580;transform:scaleX(.93);transform-origin:0 0;-webkit-text-stroke:.1px #2a5580;">F</div>
<div class="abs" style="left:706.7px;top:337.5px;width:52.8px;height:12.9px;background:#dfe1fb"></div>
<div class="abs" style="left:704.7px;top:351.0px;width:55.5px;height:1.0px;background:#b9bcdc"></div>
<div class="abs" style="left:759.0px;top:337.1px;width:11.0px;height:17.7px;border:1px solid #dfe2e9"></div>
<div class="t" style="left:761.9px;top:341.4px;font-size:10.0px;color:#2a5580;transform:scaleX(.93);transform-origin:0 0;-webkit-text-stroke:.1px #2a5580;">C</div>
<div class="abs" style="left:558.7px;top:352.8px;width:11.2px;height:18.0px;border:1px solid #dfe2e9"></div>
<div class="t" style="left:561.9px;top:356.6px;font-size:10.6px;color:#224c78;-webkit-text-stroke:.2px #224c78;transform:scaleX(.9);transform-origin:0 0;">R</div>
<div class="abs" style="left:584.8px;top:352.8px;width:13.2px;height:18.0px;border:1px solid #dfe2e9"></div>
<div class="t" style="left:588.0px;top:356.6px;font-size:10.6px;color:#224c78;-webkit-text-stroke:.2px #224c78;transform:scaleX(.9);transform-origin:0 0;">O</div>
<div class="abs" style="left:614.4px;top:352.8px;width:12.2px;height:18.0px;border:1px solid #dfe2e9"></div>
<div class="t" style="left:617.6px;top:356.6px;font-size:10.6px;color:#224c78;-webkit-text-stroke:.2px #224c78;transform:scaleX(.9);transform-origin:0 0;">Y</div>
<div class="abs" style="left:642.4px;top:352.8px;width:13.2px;height:18.0px;border:1px solid #dfe2e9"></div>
<div class="t" style="left:645.6px;top:356.6px;font-size:10.6px;color:#224c78;-webkit-text-stroke:.2px #224c78;transform:scaleX(.9);transform-origin:0 0;">G</div>
<div class="abs" style="left:671.6px;top:352.8px;width:39.2px;height:18.0px;border:1px solid #dfe2e9"></div>
<div class="t" style="left:674.8px;top:356.6px;font-size:10.6px;color:#224c78;-webkit-text-stroke:.2px #224c78;transform:scaleX(.9);transform-origin:0 0;letter-spacing:.65px;">B/P/BL</div>
<div class="abs" style="left:728.6px;top:352.8px;width:43.2px;height:18.0px;border:1px solid #dfe2e9"></div>
<div class="t" style="left:731.8px;top:356.6px;font-size:10.6px;color:#224c78;-webkit-text-stroke:.2px #224c78;transform:scaleX(.9);transform-origin:0 0;letter-spacing:.77px;">W/T/BR</div>
<div class="abs" style="left:69.0px;top:372.4px;width:38.3px;height:18.5px;border:1px solid #dfe2e9"></div>
<div class="abs" style="left:69.0px;top:387.4px;width:28.0px;height:16.5px;border:1px solid #dfe2e9"></div>
<div class="t" style="left:71.3px;top:376.8px;font-size:10.5px;color:#3b6b9b;letter-spacing:.12px;">Dinner</div>
<div class="t" style="left:71.3px;top:390.7px;font-size:10.5px;color:#27466c;letter-spacing:.45px;">Time</div>
<div class="abs" style="left:192.6px;top:376.6px;width:346.0px;height:23.0px;background:#dfe1fb"></div>
<div class="abs" style="left:551.5px;top:373.1px;width:55.3px;height:12.9px;background:#dfe1fb"></div>
<div class="abs" style="left:549.5px;top:386.6px;width:58.0px;height:1.0px;background:#b9bcdc"></div>
<div class="abs" style="left:606.0px;top:372.7px;width:11.0px;height:17.7px;border:1px solid #dfe2e9"></div>
<div class="t" style="left:608.9px;top:377.0px;font-size:10.0px;color:#2a5580;transform:scaleX(.93);transform-origin:0 0;-webkit-text-stroke:.1px #2a5580;">P</div>
<div class="abs" style="left:628.2px;top:373.1px;width:52.8px;height:12.9px;background:#dfe1fb"></div>
<div class="abs" style="left:626.2px;top:386.6px;width:55.5px;height:1.0px;background:#b9bcdc"></div>
<div class="abs" style="left:681.6px;top:372.7px;width:11.0px;height:17.7px;border:1px solid #dfe2e9"></div>
<div class="t" style="left:684.5px;top:377.0px;font-size:10.0px;color:#2a5580;transform:scaleX(.93);transform-origin:0 0;-webkit-text-stroke:.1px #2a5580;">F</div>
<div class="abs" style="left:706.7px;top:373.1px;width:52.8px;height:12.9px;background:#dfe1fb"></div>
<div class="abs" style="left:704.7px;top:386.6px;width:55.5px;height:1.0px;background:#b9bcdc"></div>
<div class="abs" style="left:759.0px;top:372.7px;width:11.0px;height:17.7px;border:1px solid #dfe2e9"></div>
<div class="t" style="left:761.9px;top:377.0px;font-size:10.0px;color:#2a5580;transform:scaleX(.93);transform-origin:0 0;-webkit-text-stroke:.1px #2a5580;">C</div>
<div class="abs" style="left:558.7px;top:388.4px;width:11.2px;height:18.0px;border:1px solid #dfe2e9"></div>
<div class="t" style="left:561.9px;top:392.2px;font-size:10.6px;color:#224c78;-webkit-text-stroke:.2px #224c78;transform:scaleX(.9);transform-origin:0 0;">R</div>
<div class="abs" style="left:584.8px;top:388.4px;width:13.2px;height:18.0px;border:1px solid #dfe2e9"></div>
<div class="t" style="left:588.0px;top:392.2px;font-size:10.6px;color:#224c78;-webkit-text-stroke:.2px #224c78;transform:scaleX(.9);transform-origin:0 0;">O</div>
<div class="abs" style="left:614.4px;top:388.4px;width:12.2px;height:18.0px;border:1px solid #dfe2e9"></div>
<div class="t" style="left:617.6px;top:392.2px;font-size:10.6px;color:#224c78;-webkit-text-stroke:.2px #224c78;transform:scaleX(.9);transform-origin:0 0;">Y</div>
<div class="abs" style="left:642.4px;top:388.4px;width:13.2px;height:18.0px;border:1px solid #dfe2e9"></div>
<div class="t" style="left:645.6px;top:392.2px;font-size:10.6px;color:#224c78;-webkit-text-stroke:.2px #224c78;transform:scaleX(.9);transform-origin:0 0;">G</div>
<div class="abs" style="left:671.6px;top:388.4px;width:39.2px;height:18.0px;border:1px solid #dfe2e9"></div>
<div class="t" style="left:674.8px;top:392.2px;font-size:10.6px;color:#224c78;-webkit-text-stroke:.2px #224c78;transform:scaleX(.9);transform-origin:0 0;letter-spacing:.65px;">B/P/BL</div>
<div class="abs" style="left:728.6px;top:388.4px;width:43.2px;height:18.0px;border:1px solid #dfe2e9"></div>
<div class="t" style="left:731.8px;top:392.2px;font-size:10.6px;color:#224c78;-webkit-text-stroke:.2px #224c78;transform:scaleX(.9);transform-origin:0 0;letter-spacing:.77px;">W/T/BR</div>
<div class="abs" style="left:69.0px;top:408.0px;width:53.8px;height:18.5px;border:1px solid #dfe2e9"></div>
<div class="abs" style="left:69.0px;top:423.0px;width:28.0px;height:16.5px;border:1px solid #dfe2e9"></div>
<div class="t" style="left:71.3px;top:412.4px;font-size:10.5px;color:#3b6b9b;letter-spacing:.12px;">PM Snack</div>
<div class="t" style="left:71.3px;top:426.3px;font-size:10.5px;color:#27466c;letter-spacing:.45px;">Time</div>
<div class="abs" style="left:192.6px;top:413.0px;width:346.0px;height:23.0px;background:#dfe1fb"></div>
<div class="abs" style="left:551.5px;top:408.7px;width:55.3px;height:12.9px;background:#dfe1fb"></div>
<div class="abs" style="left:549.5px;top:422.2px;width:58.0px;height:1.0px;background:#b9bcdc"></div>
<div class="abs" style="left:606.0px;top:408.3px;width:11.0px;height:17.7px;border:1px solid #dfe2e9"></div>
<div class="t" style="left:608.9px;top:412.6px;font-size:10.0px;color:#2a5580;transform:scaleX(.93);transform-origin:0 0;-webkit-text-stroke:.1px #2a5580;">P</div>
<div class="abs" style="left:628.2px;top:408.7px;width:52.8px;height:12.9px;background:#dfe1fb"></div>
<div class="abs" style="left:626.2px;top:422.2px;width:55.5px;height:1.0px;background:#b9bcdc"></div>
<div class="abs" style="left:681.6px;top:408.3px;width:11.0px;height:17.7px;border:1px solid #dfe2e9"></div>
<div class="t" style="left:684.5px;top:412.6px;font-size:10.0px;color:#2a5580;transform:scaleX(.93);transform-origin:0 0;-webkit-text-stroke:.1px #2a5580;">F</div>
<div class="abs" style="left:706.7px;top:408.7px;width:52.8px;height:12.9px;background:#dfe1fb"></div>
<div class="abs" style="left:704.7px;top:422.2px;width:55.5px;height:1.0px;background:#b9bcdc"></div>
<div class="abs" style="left:759.0px;top:408.3px;width:11.0px;height:17.7px;border:1px solid #dfe2e9"></div>
<div class="t" style="left:761.9px;top:412.6px;font-size:10.0px;color:#2a5580;transform:scaleX(.93);transform-origin:0 0;-webkit-text-stroke:.1px #2a5580;">C</div>
<div class="abs" style="left:558.7px;top:424.0px;width:11.2px;height:18.0px;border:1px solid #dfe2e9"></div>
<div class="t" style="left:561.9px;top:427.8px;font-size:10.6px;color:#224c78;-webkit-text-stroke:.2px #224c78;transform:scaleX(.9);transform-origin:0 0;">R</div>
<div class="abs" style="left:584.8px;top:424.0px;width:13.2px;height:18.0px;border:1px solid #dfe2e9"></div>
<div class="t" style="left:588.0px;top:427.8px;font-size:10.6px;color:#224c78;-webkit-text-stroke:.2px #224c78;transform:scaleX(.9);transform-origin:0 0;">O</div>
<div class="abs" style="left:614.4px;top:424.0px;width:12.2px;height:18.0px;border:1px solid #dfe2e9"></div>
<div class="t" style="left:617.6px;top:427.8px;font-size:10.6px;color:#224c78;-webkit-text-stroke:.2px #224c78;transform:scaleX(.9);transform-origin:0 0;">Y</div>
<div class="abs" style="left:642.4px;top:424.0px;width:13.2px;height:18.0px;border:1px solid #dfe2e9"></div>
<div class="t" style="left:645.6px;top:427.8px;font-size:10.6px;color:#224c78;-webkit-text-stroke:.2px #224c78;transform:scaleX(.9);transform-origin:0 0;">G</div>
<div class="abs" style="left:671.6px;top:424.0px;width:39.2px;height:18.0px;border:1px solid #dfe2e9"></div>
<div class="t" style="left:674.8px;top:427.8px;font-size:10.6px;color:#224c78;-webkit-text-stroke:.2px #224c78;transform:scaleX(.9);transform-origin:0 0;letter-spacing:.65px;">B/P/BL</div>
<div class="abs" style="left:728.6px;top:424.0px;width:43.2px;height:18.0px;border:1px solid #dfe2e9"></div>
<div class="t" style="left:731.8px;top:427.8px;font-size:10.6px;color:#224c78;-webkit-text-stroke:.2px #224c78;transform:scaleX(.9);transform-origin:0 0;letter-spacing:.77px;">W/T/BR</div>
<svg style="left:0;top:0" width="845" height="429" viewBox="0 148 845 429"><rect x="551.25" y="399.75" width="6.300" height="6.500" fill="#e4ecf8" stroke="#1a2a70" stroke-width="1.300"/><rect x="579.05" y="399.75" width="6.300" height="6.500" fill="#e4ecf8" stroke="#1a2a70" stroke-width="1.300"/><rect x="608.95" y="399.75" width="6.300" height="6.500" fill="#e4ecf8" stroke="#1a2a70" stroke-width="1.300"/><rect x="637.25" y="399.75" width="6.300" height="6.500" fill="#e4ecf8" stroke="#1a2a70" stroke-width="1.300"/><rect x="666.45" y="399.75" width="6.300" height="6.500" fill="#e4ecf8" stroke="#1a2a70" stroke-width="1.300"/><rect x="721.95" y="399.75" width="6.300" height="6.500" fill="#e4ecf8" stroke="#1a2a70" stroke-width="1.300"/><rect x="551.25" y="435.35" width="6.300" height="6.500" fill="#e4ecf8" stroke="#1a2a70" stroke-width="1.300"/><rect x="579.05" y="435.35" width="6.300" height="6.500" fill="#e4ecf8" stroke="#1a2a70" stroke-width="1.300"/><rect x="608.95" y="435.35" width="6.300" height="6.500" fill="#e4ecf8" stroke="#1a2a70" stroke-width="1.300"/><rect x="637.25" y="435.35" width="6.300" height="6.500" fill="#e4ecf8" stroke="#1a2a70" stroke-width="1.300"/><rect x="666.45" y="435.35" width="6.300" height="6.500" fill="#e4ecf8" stroke="#1a2a70" stroke-width="1.300"/><rect x="721.95" y="435.35" width="6.300" height="6.500" fill="#e4ecf8" stroke="#1a2a70" stroke-width="1.300"/><rect x="551.25" y="470.95" width="6.300" height="6.500" fill="#e4ecf8" stroke="#1a2a70" stroke-width="1.300"/><rect x="579.05" y="470.95" width="6.300" height="6.500" fill="#e4ecf8" stroke="#1a2a70" stroke-width="1.300"/><rect x="608.95" y="470.95" width="6.300" height="6.500" fill="#e4ecf8" stroke="#1a2a70" stroke-width="1.300"/><rect x="637.25" y="470.95" width="6.300" height="6.500" fill="#e4ecf8" stroke="#1a2a70" stroke-width="1.300"/><rect x="666.45" y="470.95" width="6.300" height="6.500" fill="#e4ecf8" stroke="#1a2a70" stroke-width="1.300"/><rect x="721.95" y="470.95" width="6.300" height="6.500" fill="#e4ecf8" stroke="#1a2a70" stroke-width="1.300"/><rect x="551.25" y="506.55" width="6.300" height="6.500" fill="#e4ecf8" stroke="#1a2a70" stroke-width="1.300"/><rect x="579.05" y="506.55" width="6.300" height="6.500" fill="#e4ecf8" stroke="#1a2a70" stroke-width="1.300"/><rect x="608.95" y="506.55" width="6.300" height="6.500" fill="#e4ecf8" stroke="#1a2a70" stroke-width="1.300"/><rect x="637.25" y="506.55" width="6.300" height="6.500" fill="#e4ecf8" stroke="#1a2a70" stroke-width="1.300"/><rect x="666.45" y="506.55" width="6.300" height="6.500" fill="#e4ecf8" stroke="#1a2a70" stroke-width="1.300"/><rect x="721.95" y="506.55" width="6.300" height="6.500" fill="#e4ecf8" stroke="#1a2a70" stroke-width="1.300"/><rect x="551.25" y="542.15" width="6.300" height="6.500" fill="#e4ecf8" stroke="#1a2a70" stroke-width="1.300"/><path d="M552.20 546.70L556.80 542.90M552.40 545.30l1.300 1.700" fill="none" stroke="#0e1a4a" stroke-width="1.100"/><rect x="579.05" y="542.15" width="6.300" height="6.500" fill="#e4ecf8" stroke="#1a2a70" stroke-width="1.300"/><path d="M580.00 546.70L584.60 542.90M580.20 545.30l1.300 1.700" fill="none" stroke="#0e1a4a" stroke-width="1.100"/><rect x="608.95" y="542.15" width="6.300" height="6.500" fill="#e4ecf8" stroke="#1a2a70" stroke-width="1.300"/><rect x="637.25" y="542.15" width="6.300" height="6.500" fill="#e4ecf8" stroke="#1a2a70" stroke-width="1.300"/><rect x="666.45" y="542.15" width="6.300" height="6.500" fill="#e4ecf8" stroke="#1a2a70" stroke-width="1.300"/><rect x="721.95" y="542.15" width="6.300" height="6.500" fill="#e4ecf8" stroke="#1a2a70" stroke-width="1.300"/><rect x="551.25" y="577.75" width="6.300" height="6.500" fill="#e4ecf8" stroke="#1a2a70" stroke-width="1.300"/><rect x="579.05" y="577.75" width="6.300" height="6.500" fill="#e4ecf8" stroke="#1a2a70" stroke-width="1.300"/><rect x="608.95" y="577.75" width="6.300" height="6.500" fill="#e4ecf8" stroke="#1a2a70" stroke-width="1.300"/><rect x="637.25" y="577.75" width="6.300" height="6.500" fill="#e4ecf8" stroke="#1a2a70" stroke-width="1.300"/><rect x="666.45" y="577.75" width="6.300" height="6.500" fill="#e4ecf8" stroke="#1a2a70" stroke-width="1.300"/><rect x="721.95" y="577.75" width="6.300" height="6.500" fill="#e4ecf8" stroke="#1a2a70" stroke-width="1.300"/></svg>
</div>
<div id="panel" class="abs">
<svg style="left:0;top:0" width="255" height="429" viewBox="845 148 255 429"><rect x="862.6" y="148" width="184" height="429" fill="#fbfbfc"/>
<rect x="1046.4" y="148" width="14.2" height="429" fill="#f2f2f3"/>
<rect x="1060.6" y="148" width="39.4" height="429" fill="#fbfbfc"/>
<rect x="1060.100" y="148" width="1" height="429" fill="#e4e4e6"/>
<path d="M849.200 357.400l5.800 4.600-5.800 4.600z" fill="#4f4f52"/>
<rect x="1052" y="163" width="2.800" height="304.500" rx="1.400" fill="#6e6e72"/>
<path d="M1018.800 198.600h5.200l-2.600 3.300z" fill="#55555a"/>
<path d="M875.300 212.200h152.700M876 245.600h55.400" stroke="#d9d9dc" stroke-width="1"/>
<path d="M921 232.500h5.200l-2.600 3.300z" fill="#55555a"/>
<rect x="940.900" y="221" width="25.200" height="25.200" rx="2.200" fill="#fff" stroke="#c6c6ca" stroke-width="1"/>
<rect x="944.400" y="224.500" width="18.400" height="18" fill="#0f74bd"/>
<path d="M878.70 258.20H892.40V263.00h-1.100l-.6-2.200H887.15V270.40l2.78 .3V271.50H881.17v-.8l2.78-.3V260.80H880.40l-.6 2.200H878.70z" fill="#1469c6"/>
<path d="M912.20 258.20H925.70V261.90h-1.100l-.6-2.200H919.70V270.40l3.30 .3V271.50H914.90v-.8l3.30-.3V259.70H913.90l-.6 2.200H912.20z" fill="#55555a" transform="skewX(-15) translate(70.98,0)"/>
<path d="M945.80 258.20H959.30V261.90h-1.100l-.6-2.200H953.30V268.30l3.30 .3V269.40H948.50v-.8l3.30-.3V259.70H947.50l-.6 2.200H945.80z" fill="#55555a"/>
<path d="M945.400 273.600h14.300" stroke="#55555a" stroke-width="1.200"/>
<path d="M978.80 259.60H990.90V263.30h-1.100l-.6-2.200H985.60V270.40l2.88 .3V271.50H981.22v-.8l2.88-.3V261.10H980.50l-.6 2.200H978.80z" fill="#55555a"/>
<path d="M1012.20 258.20H1023.80V261.90h-1.100l-.6-2.200H1018.75V268.90l2.73 .3V270.00H1014.52v-.8l2.73-.3V259.70H1013.90l-.6 2.200H1012.20z" fill="#55555a"/>
<g fill="#fdfdfe" stroke="#b4b4b8" stroke-width="1"><rect x="875.800" y="284" width="55.800" height="24.600"/><rect x="941.100" y="284" width="56.400" height="24.600"/></g>
<path d="M911.500 284v24.600M976.700 284v24.600" stroke="#b4b4b8" stroke-width="1"/>
<circle cx="886" cy="289.7" r="1.250" fill="#55555a"/><path d="M890.300 289.7h11.300M955.700 289.7h11.300" stroke="#55555a" stroke-width="1.300"/>
<circle cx="886" cy="295.7" r="1.250" fill="#55555a"/><path d="M890.300 295.7h11.300M955.700 295.7h11.300" stroke="#55555a" stroke-width="1.300"/>
<circle cx="886" cy="301.7" r="1.250" fill="#55555a"/><path d="M890.300 301.7h11.300M955.700 301.7h11.300" stroke="#55555a" stroke-width="1.300"/>
<path d="M918.900 294.500h5.200l-2.600 3.300zM984.500 294.500h5.200l-2.600 3.300z" fill="#55555a"/>
<path d="M878.2 321.8H893.8M878.2 325.6H888.5M878.2 329.4H893.8M878.2 333.1H888.5" stroke="#1469c6" stroke-width="1.500"/>
<path d="M911.5 321.8H927.3M914.7 325.6H924.1M911.5 329.4H927.3M914.7 333.1H924.1" stroke="#55555a" stroke-width="1.500"/>
<path d="M944.0 321.8H959.7M949.3 325.6H959.7M944.0 329.4H959.7M949.3 333.1H959.7" stroke="#55555a" stroke-width="1.500"/>
<path d="M977.9 321.8H993.5M977.9 325.6H993.5M977.9 329.4H993.5M977.9 333.1H993.5" stroke="#55555a" stroke-width="1.500"/>
<path d="M878.7 351.8V364.5" stroke="#55555a" stroke-width="1.500"/><path d="M875.9000000000001 353.7L878.7 350.3l2.800 3.400zM875.9000000000001 362.6L878.7 366l2.800-3.400z" fill="#55555a"/>
<path d="M883.200 354.600h11M883.200 358.200h11M883.200 361.900h11" stroke="#55555a" stroke-width="1.500"/>
<path d="M959.2 351.8V364.5" stroke="#55555a" stroke-width="1.500"/><path d="M956.4000000000001 353.7L959.2 350.3l2.800 3.400zM956.4000000000001 362.6L959.2 366l2.800-3.400z" fill="#55555a"/>
<path d="M964 353.200h11.300M964 356.800h11.300M964 360.400h11.300M964 364h11.300" stroke="#55555a" stroke-width="1.500"/>
<path d="M936.300 357h5l-2.500 3.200zM1016.600 357h5l-2.500 3.200zM936.300 391h5l-2.500 3.200zM1016.600 391h5l-2.500 3.200z" fill="#55555a"/>
<path d="M901 371.200h44M981.400 371.200h46.400M901 404.600h44M981.400 404.600h46.400" stroke="#e2e2e5" stroke-width="1"/>
<path d="M880.50 384.40H891.70V389.20h-1.100l-.6-2.200H887.70V393.70l1.98 .3V394.80H882.52v-.8l1.98-.3V387.00H882.20l-.6 2.200H880.50z" fill="#55555a"/>
<path d="M877.5 397.8H893.7" stroke="#55555a" stroke-width="1.500"/><path d="M879.6 395.2L876 397.8l3.600 2.600zM891.6 395.2L895.2 397.8l-3.600 2.600z" fill="#55555a"/>
<path d="M958.5 397.8H974.3" stroke="#55555a" stroke-width="1.500"/><path d="M960.6 395.2L957 397.8l3.600 2.600zM972.1999999999999 395.2L975.8 397.8l-3.600 2.600z" fill="#55555a"/>
<path d="M875.300 416.200h158M875.300 540.500h158" stroke="#e2e2e5" stroke-width="1"/>
<path d="M879.300 453v7.200h14.600z" fill="none" stroke="#b6b6ba" stroke-width="1.200" stroke-linejoin="round"/><path d="M878.700 462.800h16l-16 7.600z" fill="#b6b6ba"/>
<path d="M917.200 453.600v13.500h-7.400z" fill="none" stroke="#b6b6ba" stroke-width="1.200" stroke-linejoin="round"/><path d="M919.800 453v14.700h8.400z" fill="#b6b6ba"/>
<path d="M943.200 455.600h14.800v13M947.200 452v14.600h14.200" fill="none" stroke="#b6b6ba" stroke-width="1.700"/><circle cx="960.600" cy="469.800" r=".8" fill="#b6b6ba"/>
<path d="M978.300 453.300v16.200" stroke="#b6b6ba" stroke-width="1.300"/><rect x="981.300" y="455" width="7.500" height="3.800" fill="none" stroke="#b6b6ba" stroke-width="1.300"/><rect x="981.300" y="462" width="11.200" height="5" fill="none" stroke="#b6b6ba" stroke-width="1.300"/>
<path d="M998 460.300h5.400l-2.700 3.300zM998 489.300h5.400l-2.700 3.300z" fill="#b6b6ba"/>
<path d="M881.500 497.300a7.600 7.600 0 1 1 10.300-.5" fill="none" stroke="#b6b6ba" stroke-width="1.500"/><path d="M876.300 492.800h6.400v5.800z" fill="#b6b6ba"/>
<path d="M923 497.300a7.600 7.600 0 1 0-10.300-.5" fill="none" stroke="#b6b6ba" stroke-width="1.500"/><path d="M928.200 492.800h-6.400v5.800z" fill="#b6b6ba"/>
<path d="M946 488v-6.500h14M948.500 484.500h13.500v11.500h-11" fill="none" stroke="#b6b6ba" stroke-width="1.300"/><path d="M951.500 494.500l3-4 2 2.300 1.800-1.500 2.700 3.200z" fill="#b6b6ba"/><path d="M942.400 494h6M946.300 491l3 3-3 3" fill="none" stroke="#b6b6ba" stroke-width="1.400"/>
<path d="M981.500 494v-11h9" fill="none" stroke="#b6b6ba" stroke-width="1.500"/><path d="M978.700 491v-8.300h3" fill="none" stroke="#b6b6ba" stroke-width="1.300"/><rect x="983.600" y="485.800" width="9" height="10.700" fill="none" stroke="#b6b6ba" stroke-width="1.500"/>
<path d="M889.200 510.600l3.700 3.700-10.700 10.700-4.800 1.300 1.200-4.900z" fill="#b6b6ba"/><path d="M890.600 509.300l1-.9q.8-.5 1.500.1l1.600 1.700q.6.700 0 1.400l-1 1z" fill="#b6b6ba"/><path d="M879.300 522.500l2.800 2.800" stroke="#fbfbfc" stroke-width=".8"/>
<path d="M1021.600 517.500h5.600l-2.800 3.500z" fill="#a8a8ac"/>
<path d="M884.500 577l1.800-1.600 1.800 1.600z" fill="#55555a"/>
<path d="M1081.500 175.200h-7.300q-1.600 0-1.600-1.600v-13.200q0-1.600 1.600-1.600h7.500l5.300 5v3.800" fill="#fbe4e6" stroke="#d6323c" stroke-width="1.400" stroke-linejoin="round"/><path d="M1075.500 170.200c1.800-1.200 3-3.800 3.200-5.800c0-1-.8-1-.7 0c.3 2 1.800 4 3.600 4.600" fill="none" stroke="#d6323c" stroke-width=".9"/><circle cx="1086" cy="172.200" r="4.700" fill="#d6323c"/><path d="M1083.300 172.200h5.400M1086 169.500v5.400" stroke="#fff" stroke-width="1.500"/>
<path d="M1071 197.500h8.400l0 11.300h-8.400q-.8 0-.8-.8v-9.700q0-.8 .8-.8z" fill="#e6e5fb" stroke="#5a55e0" stroke-width="1.400"/><path d="M1080.200 196.500h6.200l4.200 4v9.500h-10.400z" fill="#5a55e0"/><path d="M1072.800 205.500c1.300-.9 2.300-2.700 2.400-4.300c0-.8-.6-.8-.5 0c.2 1.500 1.300 3 2.700 3.500" fill="none" stroke="#5a55e0" stroke-width=".8"/><path d="M1079.600 207v6" stroke="#5a55e0" stroke-width="2"/><path d="M1075.600 211.600h8l-4 4.800z" fill="#5a55e0"/>
<rect x="1060.600" y="227.200" width="39.400" height="38.600" fill="#c6168d"/>
<g fill="none" stroke="#fff" stroke-width="1.500"><rect x="1071.600" y="238.700" width="18.400" height="6.200"/><rect x="1071.600" y="248.200" width="7.600" height="6.700"/><path d="M1083 248.600h7.600M1083 251.600h7.600M1083 254.800h7.600" stroke-width="1.100"/></g>
<path d="M1080.500 294.600h-6.500q-1.400 0-1.400-1.400v-13.600q0-1.400 1.400-1.400h7.300l5 4.800v3.500" fill="#dff1ee" stroke="#1f9688" stroke-width="1.400" stroke-linejoin="round"/><path d="M1075.200 289.800c1.800-1.200 3-3.800 3.200-5.800c0-1-.8-1-.7 0c.3 2 1.800 4 3.600 4.600" fill="none" stroke="#1f9688" stroke-width=".9"/><circle cx="1086" cy="291.600" r="4.700" fill="#1f9688"/><path d="M1083.200 291.600h5M1086.300 289.300l2.300 2.300-2.300 2.300" fill="none" stroke="#fff" stroke-width="1.300"/>
<rect x="1082.300" y="317.600" width="7.600" height="15.600" fill="#e4f5d4" stroke="#7ccb3f" stroke-width="1.500"/><path d="M1072.600 324v9.200h7.400V321" fill="none" stroke="#7ccb3f" stroke-width="1.400" stroke-dasharray="1.600 1.300"/><path d="M1072.400 317.200l5.600 5.200M1073 322.600h5.200v-5" fill="none" stroke="#7ccb3f" stroke-width="1.400"/>
<path d="M1082.500 371h-9.200q-1.300 0-1.300-1.300v-13q0-1.300 1.300-1.300h7l5.200 5v3" fill="#f4eeb2" stroke="#d2bd1c" stroke-width="1.500" stroke-linejoin="round"/><path d="M1080.300 355.800v4.700h4.900" fill="none" stroke="#d2bd1c" stroke-width="1.200"/><path d="M1082.300 364h7.700v6.500h-4.200l-2 2.200v-2.200h-1.500z" fill="#d2bd1c"/><path d="M1084 366.500h4.400" stroke="#fff" stroke-width=".9"/>
<path d="M1073.500 396.400h14q1.600 0 1.600 1.600v9.200q0 1.600-1.600 1.600h-6.700l-4 4.200v-4.200h-3.300q-1.600 0-1.600-1.600v-9.200q0-1.600 1.600-1.600z" fill="#d2bd1c"/><path d="M1074.600 400.600h11.800M1074.600 404.200h11.800" stroke="#fff" stroke-width="1.400"/>
<path d="M1083.800 436.800l3.700 3.300-8.600 10.200-5.800 1.800 1.500-5.700z" fill="#e6dcfa" stroke="#6a2fd4" stroke-width="1.500" stroke-linejoin="round"/><path d="M1071.300 452.700c1.600-.6 2.300-.6 2.800-.3M1080.500 452.300c1.200-2.600 2.200-3.600 2.800-3.200c.7.600-.8 3.300.3 3.400c1 0 1.200-2.200 2.100-2.200c.8 0 .1 2 1 2c.7 0 1.200-1 3.600-.7" fill="none" stroke="#6a2fd4" stroke-width="1.300" stroke-linecap="round"/>
<path d="M1076.600 481.800v-6q0-1 1-1h4l4.400 4.200v2.800" fill="#d9f1dd" stroke="#34ae48" stroke-width="1.500" stroke-linejoin="round"/><rect x="1071.600" y="481.600" width="18.200" height="4.600" rx="1" fill="#34ae48"/><path d="M1073.800 486v7M1087.600 486v7" stroke="#34ae48" stroke-width="1.500"/><path d="M1075.500 492.800h11" stroke="#34ae48" stroke-width="1.400" stroke-dasharray="1.600 1.300"/><path d="M1076.400 488.200h8.800" stroke="#34ae48" stroke-width="1.200" stroke-dasharray="1.500 1.200"/><path d="M1088.200 473.600v3.200M1086.600 475.200h3.200M1072.600 475v2M1071.600 476h2" stroke="#34ae48" stroke-width=".9"/>
<path d="M1080.400 514.400c2.400 1.600 4.800 2.300 7.400 2.400v6c0 4.800-3 8-7.400 9.800c-4.400-1.800-7.400-5-7.400-9.800v-6c2.600-.1 5-.8 7.400-2.400z" fill="#fbfbfc" stroke="#5848e0" stroke-width="1.600" stroke-linejoin="round"/><path d="M1080.400 515.300c-2.200 1.400-4.300 2-6.600 2.200v5.400c0 4.300 2.700 7.200 6.600 8.800z" fill="#d5d1f8"/>
<path d="M1074.600 557.200q.3-2.400 3-2.400h5q2.700 0 3 2.400" fill="none" stroke="#c6168d" stroke-width="1.700"/>
<rect x="1061.200" y="557.400" width="38.800" height="19.600" fill="#fbfbfc"/>
<path d="M1075.800 564.200l4.900 4.600 4.900-4.600" fill="none" stroke="#3e3e42" stroke-width="1.500"/></svg>
<div class="t" style="left:30.6px;top:19.5px;font-size:10.2px;font-weight:bold;color:#2c2c2f;letter-spacing:-0.32px;">FORMAT</div>
<div class="t" style="left:35.8px;top:48.3px;font-size:10.1px;color:#6c6c70;">Avenir Heavy</div>
<div class="t" style="left:44.8px;top:81.4px;font-size:10.4px;color:#6c6c70;letter-spacing:-0.5px;">15</div>
<div class="t" style="left:146.8px;top:107.9px;font-size:8.6px;color:#55555a;font-weight:bold;">1</div>
<div class="t" style="left:178.6px;top:117.6px;font-size:8.4px;color:#55555a;font-weight:bold;">1</div>
<div class="t" style="left:104.8px;top:138.6px;font-size:6.2px;color:#55555a;font-weight:bold;">1</div>
<div class="t" style="left:104.8px;top:144.6px;font-size:6.2px;color:#55555a;font-weight:bold;">2</div>
<div class="t" style="left:104.8px;top:150.6px;font-size:6.2px;color:#55555a;font-weight:bold;">3</div>
<div class="t" style="left:60.0px;top:206.5px;font-size:10.4px;color:#8c8c90;letter-spacing:-0.3px;">1.20</div>
<div class="t" style="left:147.6px;top:206.5px;font-size:10.4px;color:#8c8c90;">0</div>
<div class="t" style="left:61.8px;top:240.3px;font-size:10.4px;color:#8c8c90;letter-spacing:-0.5px;">100</div>
<div class="t" style="left:139.5px;top:240.3px;font-size:10.4px;color:#8c8c90;letter-spacing:-0.4px;">-0.48</div>
<div class="t" style="left:115.0px;top:237.6px;font-size:10.4px;color:#55555a;font-weight:bold;letter-spacing:-0.9px;">AV</div>
<div class="t" style="left:31.0px;top:283.6px;font-size:10.2px;font-weight:bold;color:#2c2c2f;letter-spacing:-0.8px;">OBJECTS</div>
<div class="t" style="left:55.0px;top:365.1px;font-size:11.4px;color:#b4b4b8;">Edit Using...</div>
<div class="t" style="left:31.0px;top:408.4px;font-size:10.2px;font-weight:bold;color:#2c2c2f;letter-spacing:-0.17px;">SCANNED DOCUMENTS</div>
</div>
</body>
</html>
